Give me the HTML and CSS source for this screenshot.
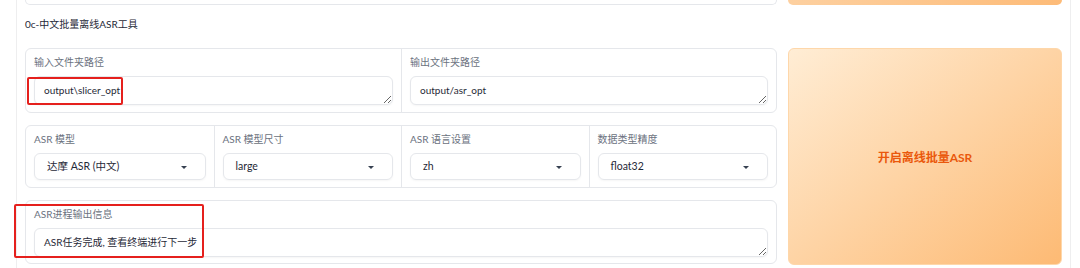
FILE: index.html
```html
<!DOCTYPE html>
<html lang="zh">
<head>
<meta charset="UTF-8">
<title>0c-中文批量离线ASR工具</title>
<link rel="stylesheet" href="styles.css">
</head>
<body>
<div class="page">
    <div class="prev-row">
        <div class="prev-block"></div>
        <div class="prev-btn"></div>
    </div>

    <div class="section-title">0c-中文批量离线ASR工具</div>

    <div class="tool">
        <div class="fields">
            <div class="block two">
                <div class="cell">
                    <span class="label">输入文件夹路径</span>
                    <textarea class="text-in" rows="1">output\slicer_opt</textarea>
                    <div class="mark mark-input"></div>
                </div>
                <div class="cell">
                    <span class="label">输出文件夹路径</span>
                    <textarea class="text-in" rows="1">output/asr_opt</textarea>
                </div>
            </div>

            <div class="block four">
                <div class="cell">
                    <span class="label">ASR 模型</span>
                    <div class="select">达摩 ASR (中文)<span class="caret"></span></div>
                </div>
                <div class="cell">
                    <span class="label">ASR 模型尺寸</span>
                    <div class="select">large<span class="caret"></span></div>
                </div>
                <div class="cell">
                    <span class="label">ASR 语言设置</span>
                    <div class="select">zh<span class="caret"></span></div>
                </div>
                <div class="cell">
                    <span class="label">数据类型精度</span>
                    <div class="select">float32<span class="caret"></span></div>
                </div>
            </div>

            <div class="block one">
                <div class="cell">
                    <span class="label">ASR进程输出信息</span>
                    <textarea class="text-in" rows="1">ASR任务完成, 查看终端进行下一步</textarea>
                    <div class="mark mark-output"></div>
                </div>
            </div>
        </div>

        <button class="primary-btn">开启离线批量ASR</button>
    </div>
</div>
</body>
</html>
```

FILE: styles.css
```css
body {
    margin: 0;
    background: #fff;
    font-family: Lato, "Noto Sans CJK SC", sans-serif;
    color: #1f2937;
}

.page {
    margin-left: 16px;
    width: 1055px;
    height: 268px;
    border-left: 1px solid #eeeeef;
    border-right: 1px solid #eeeeef;
    padding: 0 8px 0 8px;
    box-sizing: border-box;
}

.prev-row {
    display: flex;
    gap: 11px;
    height: 5px;
}

.prev-block {
    width: 752px;
    border: 1px solid #e5e7eb;
    border-top: none;
    border-radius: 0 0 6px 6px;
    box-sizing: border-box;
}

.prev-btn {
    flex: 1;
    background: linear-gradient(to right, #fdd0a0, #fdbb78);
    border-radius: 0 0 6px 6px;
}

.section-title {
    font-size: 10px;
    line-height: 14px;
    padding: 12px 0 0 0;
    height: 31px;
    color: #1f2937;
}

.tool {
    display: flex;
    gap: 11px;
}

.fields {
    width: 752px;
    display: flex;
    flex-direction: column;
    gap: 12px;
}

.block {
    display: grid;
    border: 1px solid #e5e7eb;
    border-radius: 6px;
    background: #fff;
    box-sizing: border-box;
}

.two { grid-template-columns: 1fr 1fr; height: 65px; }
.four { grid-template-columns: repeat(4, 1fr); height: 63px; }
.one { grid-template-columns: 1fr; height: 64px; }

.cell {
    position: relative;
    padding: 6px 8px 0 8px;
    display: flex;
    flex-direction: column;
}

.cell + .cell {
    border-left: 1px solid #e5e7eb;
}

.label {
    font-size: 10px;
    line-height: 14px;
    color: #6b7280;
    margin-bottom: 7px;
}

.text-in {
    font-family: inherit;
    font-size: 10px;
    line-height: 15px;
    color: #1f2937;
    height: 29px;
    padding: 6px 9px;
    border: 1px solid #e5e7eb;
    border-radius: 6px;
    box-sizing: border-box;
    resize: vertical;
    overflow: hidden;
    box-shadow: 0 1px 2px rgba(0, 0, 0, 0.04);
    background: #fff;
}

.select {
    position: relative;
    height: 27px;
    font-size: 10.5px;
    line-height: 25px;
    padding: 0 12px;
    border: 1px solid #e5e7eb;
    border-radius: 6px;
    box-sizing: border-box;
    box-shadow: 0 1px 2px rgba(0, 0, 0, 0.04);
}

.caret {
    position: absolute;
    right: 18px;
    top: 12px;
    border-left: 3px solid transparent;
    border-right: 3px solid transparent;
    border-top: 3px solid #374151;
}

.primary-btn {
    flex: 1;
    height: 217px;
    border: 1px solid #fed7aa;
    border-radius: 6px;
    background: linear-gradient(to bottom right, #ffedd5, #fdba74);
    color: #ea580c;
    font-family: inherit;
    font-size: 12px;
    font-weight: 700;
    padding: 0;
}

/* annotation boxes drawn over the screenshot */
.mark {
    position: absolute;
    border: 2px solid #e5201d;
    border-radius: 2px;
    box-sizing: border-box;
    pointer-events: none;
}

.mark-input {
    left: 1px;
    top: 28px;
    width: 96px;
    height: 28px;
}

.mark-output {
    left: -12px;
    top: 3px;
    width: 190px;
    height: 54px;
}
```
